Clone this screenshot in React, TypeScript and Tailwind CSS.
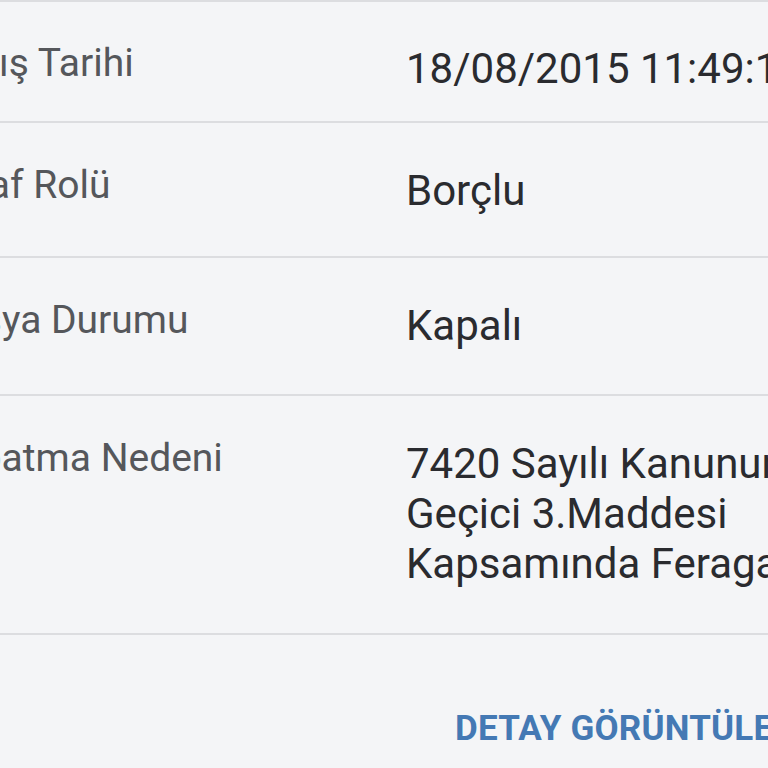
const ROWS: { label: string; value: string[]; pad: string }[] = [
  { label: "Açılış Tarihi", value: ["18/08/2015 11:49:13"], pad: "pt-[42px] pb-[27px]" },
  { label: "Taraf Rolü", value: ["Borçlu"], pad: "pt-[43px] pb-[40px]" },
  { label: "Dosya Durumu", value: ["Kapalı"], pad: "pt-[43px] pb-[43px]" },
  {
    label: "Kapatma Nedeni",
    value: ["7420 Sayılı Kanunun", "Geçici 3.Maddesi", "Kapsamında Feragat"],
    pad: "pt-[43px] pb-[44px]",
  },
];

export default function App() {
  return (
    <div
      className="w-[768px] h-[768px] overflow-hidden bg-[#f4f5f7]"
      style={{ fontFamily: "Roboto, 'Noto Sans', sans-serif" }}
    >
      <div className="ml-[-66px] w-[900px] border-t-2 border-[#dcdde0]">
        {ROWS.map(({ label, value, pad }) => (
          <div key={label} className={`flex border-b-2 border-[#dcdde0] ${pad}`}>
            <div className="w-[472px] shrink-0 -mt-[6px] text-[39px] leading-[50px] text-[#55575b] whitespace-nowrap">
              {label}
            </div>
            <div className="text-[42px] leading-[50px] text-[#2a2b2f] whitespace-nowrap">
              {value.map((v) => (
                <div key={v}>{v}</div>
              ))}
            </div>
          </div>
        ))}
        <div className="pt-[74px] pl-[521px]">
          <button
            type="button"
            className="text-[35px] leading-[40px] font-bold tracking-[0.2px] text-[#4479b4] whitespace-nowrap"
          >
            DETAY GÖRÜNTÜLE
          </button>
        </div>
      </div>
    </div>
  );
}
